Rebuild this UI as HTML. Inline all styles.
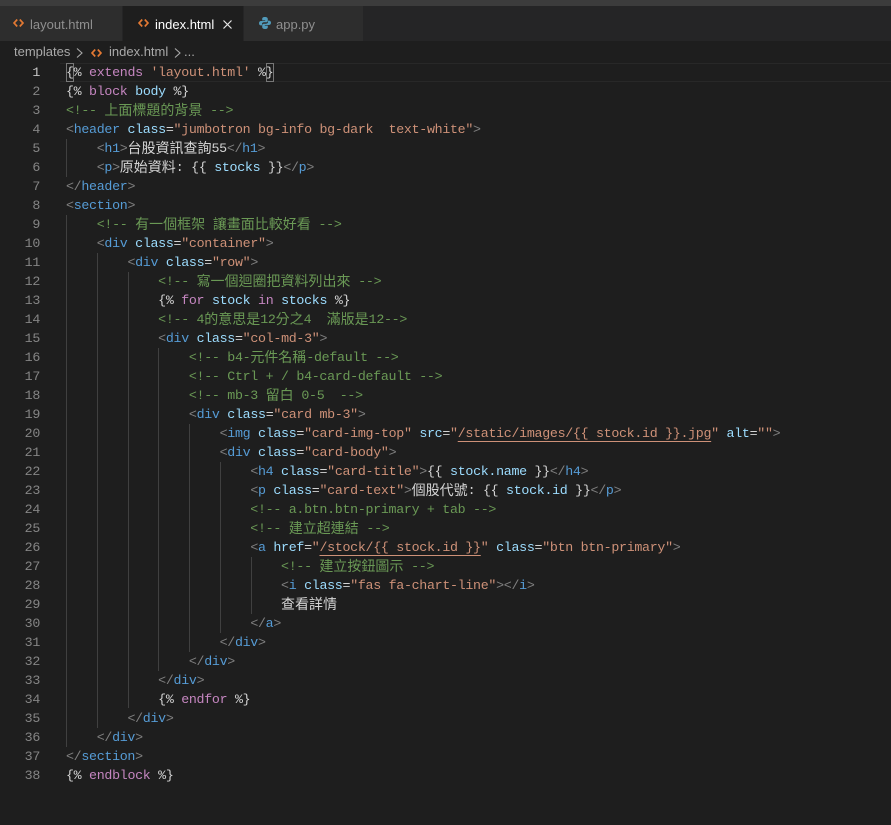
<!DOCTYPE html>
<html lang="zh-Hant"><head><meta charset="utf-8">
<style>
html,body{margin:0;padding:0;background:#1e1e1e;width:891px;height:825px;overflow:hidden}
#top{position:absolute;left:0;top:0;width:891px;height:6px;background:#3c3c3c}
#bar{position:absolute;left:0;top:6px;width:891px;height:35px;background:#252526}
.tab{position:absolute;top:6px;height:35px;background:#2d2d2d;font:13px/37px "Liberation Sans","Noto Sans CJK TC",sans-serif;color:#8f8f8f;white-space:pre}
.tab span{position:absolute;top:0}
.ic{position:absolute}
#crumb{position:absolute;left:0;top:41px;width:891px;height:22px;font:13px/22px "Liberation Sans",sans-serif;color:#a9a9a9}
#crumb span{position:absolute;top:0;white-space:pre}
#hl{position:absolute;left:60px;top:63px;width:831px;height:17px;border-top:1px solid #282828;border-bottom:1px solid #282828}
.bx{position:absolute;top:63px;width:6px;height:17px;border:1px solid #777;background:#1e1e1e}
.g{position:absolute;width:1px;background:#404040}
.n{position:absolute;left:0;width:40px;text-align:right;height:19px;font:13.3px/19px "Liberation Mono",monospace;letter-spacing:-.3px;color:#858585}
.l{position:absolute;left:66px;height:19px;font:13.3px/19px "Liberation Mono","Noto Sans CJK TC",monospace;letter-spacing:-.3px;color:#d4d4d4;white-space:pre}
.l i{font-style:normal;font-size:14px;line-height:0;letter-spacing:0;position:relative;top:1px;font-family:"Noto Sans CJK TC",sans-serif}
.t{color:#569cd6}.b{color:#808080}.a{color:#9cdcfe}.s{color:#ce9178}.m{color:#6a9955}.k{color:#c586c0}
.u{color:#ce9178;text-decoration:underline;text-decoration-skip-ink:none;text-decoration-thickness:1px;text-underline-offset:4px}
</style></head><body>
<div id="top"></div><div id="bar"></div>

<div class="tab" style="left:0;width:122px"><svg class="ic" style="left:13px;top:13px" width="11" height="8" viewBox="0 0 11 8" fill="none" stroke="#e37933" stroke-width="1.7"><path d="M4.2 .5 L1 4 L4.2 7.5 M6.8 .5 L10 4 L6.8 7.5"/></svg><span style="left:30px">layout.html</span></div>
<div class="tab" style="left:123px;width:120px;background:#1e1e1e;color:#fff"><svg class="ic" style="left:15px;top:13px" width="11" height="8" viewBox="0 0 11 8" fill="none" stroke="#e37933" stroke-width="1.7"><path d="M4.2 .5 L1 4 L4.2 7.5 M6.8 .5 L10 4 L6.8 7.5"/></svg><span style="left:32px">index.html</span><svg class="ic" style="left:100px;top:14px" width="9" height="9" viewBox="0 0 9 9" fill="none" stroke="#e8e8e8" stroke-width="1.2"><path d="M.5 .5 L8.5 8.5 M8.5 .5 L.5 8.5"/></svg></div>
<div class="tab" style="left:244px;width:119px"><svg class="ic" style="left:15px;top:11px" width="12" height="12" viewBox="0 0 12 12" fill="#519aba"><path id="py" d="M6 0 C3.6 0 3.2 1 3.2 2 V3.4 H6.2 V4 H2 C.8 4 0 4.9 0 6.2 C0 7.5 .8 8.4 2 8.4 H3 V7.1 C3 6 3.9 5.3 5 5.3 H7.2 C8.1 5.3 8.8 4.7 8.8 3.7 V2 C8.8 .9 8 0 6 0 Z"/><path transform="rotate(180 6 6)" d="M6 0 C3.6 0 3.2 1 3.2 2 V3.4 H6.2 V4 H2 C.8 4 0 4.9 0 6.2 C0 7.5 .8 8.4 2 8.4 H3 V7.1 C3 6 3.9 5.3 5 5.3 H7.2 C8.1 5.3 8.8 4.7 8.8 3.7 V2 C8.8 .9 8 0 6 0 Z"/></svg><span style="left:32px">app.py</span></div>

<div id="crumb"><span style="left:14px">templates</span><svg class="ic" style="left:76px;top:7px" width="7" height="10" viewBox="0 0 7 10" fill="none" stroke="#a9a9a9" stroke-width="1.1"><path d="M1 .5 L6 5 L1 9.5"/></svg><svg class="ic" style="left:91px;top:8px" width="11" height="8" viewBox="0 0 11 8" fill="none" stroke="#e37933" stroke-width="1.7"><path d="M4.2 .5 L1 4 L4.2 7.5 M6.8 .5 L10 4 L6.8 7.5"/></svg><span style="left:109px">index.html</span><svg class="ic" style="left:174px;top:7px" width="7" height="10" viewBox="0 0 7 10" fill="none" stroke="#a9a9a9" stroke-width="1.1"><path d="M1 .5 L6 5 L1 9.5"/></svg><span style="left:184px">...</span></div>

<div id="hl"></div>
<div class="bx" style="left:66px"></div><div class="bx" style="left:266px"></div>

<div class="g" style="left:66px;top:139px;height:38px"></div>
<div class="g" style="left:66px;top:215px;height:532px"></div>
<div class="g" style="left:97px;top:253px;height:475px"></div>
<div class="g" style="left:128px;top:272px;height:436px"></div>
<div class="g" style="left:158px;top:348px;height:323px"></div>
<div class="g" style="left:189px;top:424px;height:228px"></div>
<div class="g" style="left:220px;top:462px;height:171px"></div>
<div class="g" style="left:251px;top:557px;height:57px"></div>

<div class="n" style="top:63px;color:#c6c6c6">1</div><div class="n" style="top:82px">2</div><div class="n" style="top:101px">3</div><div class="n" style="top:120px">4</div><div class="n" style="top:139px">5</div><div class="n" style="top:158px">6</div><div class="n" style="top:177px">7</div><div class="n" style="top:196px">8</div><div class="n" style="top:215px">9</div><div class="n" style="top:234px">10</div><div class="n" style="top:253px">11</div><div class="n" style="top:272px">12</div><div class="n" style="top:291px">13</div><div class="n" style="top:310px">14</div><div class="n" style="top:329px">15</div><div class="n" style="top:348px">16</div><div class="n" style="top:367px">17</div><div class="n" style="top:386px">18</div><div class="n" style="top:405px">19</div><div class="n" style="top:424px">20</div><div class="n" style="top:443px">21</div><div class="n" style="top:462px">22</div><div class="n" style="top:481px">23</div><div class="n" style="top:500px">24</div><div class="n" style="top:519px">25</div><div class="n" style="top:538px">26</div><div class="n" style="top:557px">27</div><div class="n" style="top:576px">28</div><div class="n" style="top:595px">29</div><div class="n" style="top:614px">30</div><div class="n" style="top:633px">31</div><div class="n" style="top:652px">32</div><div class="n" style="top:671px">33</div><div class="n" style="top:690px">34</div><div class="n" style="top:709px">35</div><div class="n" style="top:728px">36</div><div class="n" style="top:747px">37</div><div class="n" style="top:766px">38</div>

<div class="l" style="top:63px">{% <span class="k">extends</span> <span class="s">'layout.html'</span> %}</div>
<div class="l" style="top:82px">{% <span class="k">block</span> <span class="a">body</span> %}</div>
<div class="l m" style="top:101px">&lt;!-- <i>上面標題的背景</i> --&gt;</div>
<div class="l" style="top:120px"><span class="b">&lt;</span><span class="t">header</span> <span class="a">class</span>=<span class="s">"jumbotron bg-info bg-dark  text-white"</span><span class="b">&gt;</span></div>
<div class="l" style="top:139px">    <span class="b">&lt;</span><span class="t">h1</span><span class="b">&gt;</span><i>台股資訊查詢</i>55<span class="b">&lt;/</span><span class="t">h1</span><span class="b">&gt;</span></div>
<div class="l" style="top:158px">    <span class="b">&lt;</span><span class="t">p</span><span class="b">&gt;</span><i>原始資料</i>: {{ <span class="a">stocks</span> }}<span class="b">&lt;/</span><span class="t">p</span><span class="b">&gt;</span></div>
<div class="l" style="top:177px"><span class="b">&lt;/</span><span class="t">header</span><span class="b">&gt;</span></div>
<div class="l" style="top:196px"><span class="b">&lt;</span><span class="t">section</span><span class="b">&gt;</span></div>
<div class="l m" style="top:215px">    &lt;!-- <i>有一個框架</i> <i>讓畫面比較好看</i> --&gt;</div>
<div class="l" style="top:234px">    <span class="b">&lt;</span><span class="t">div</span> <span class="a">class</span>=<span class="s">"container"</span><span class="b">&gt;</span></div>
<div class="l" style="top:253px">        <span class="b">&lt;</span><span class="t">div</span> <span class="a">class</span>=<span class="s">"row"</span><span class="b">&gt;</span></div>
<div class="l m" style="top:272px">            &lt;!-- <i>寫一個迴圈把資料列出來</i> --&gt;</div>
<div class="l" style="top:291px">            {% <span class="k">for</span> <span class="a">stock</span> <span class="k">in</span> <span class="a">stocks</span> %}</div>
<div class="l m" style="top:310px">            &lt;!-- 4<i>的意思是</i>12<i>分之</i>4  <i>滿版是</i>12--&gt;</div>
<div class="l" style="top:329px">            <span class="b">&lt;</span><span class="t">div</span> <span class="a">class</span>=<span class="s">"col-md-3"</span><span class="b">&gt;</span></div>
<div class="l m" style="top:348px">                &lt;!-- b4-<i>元件名稱</i>-default --&gt;</div>
<div class="l m" style="top:367px">                &lt;!-- Ctrl + / b4-card-default --&gt;</div>
<div class="l m" style="top:386px">                &lt;!-- mb-3 <i>留白</i> 0-5  --&gt;</div>
<div class="l" style="top:405px">                <span class="b">&lt;</span><span class="t">div</span> <span class="a">class</span>=<span class="s">"card mb-3"</span><span class="b">&gt;</span></div>
<div class="l" style="top:424px">                    <span class="b">&lt;</span><span class="t">img</span> <span class="a">class</span>=<span class="s">"card-img-top"</span> <span class="a">src</span>=<span class="s">"</span><span class="u">/static/images/{{ stock.id }}.jpg</span><span class="s">"</span> <span class="a">alt</span>=<span class="s">""</span><span class="b">&gt;</span></div>
<div class="l" style="top:443px">                    <span class="b">&lt;</span><span class="t">div</span> <span class="a">class</span>=<span class="s">"card-body"</span><span class="b">&gt;</span></div>
<div class="l" style="top:462px">                        <span class="b">&lt;</span><span class="t">h4</span> <span class="a">class</span>=<span class="s">"card-title"</span><span class="b">&gt;</span>{{ <span class="a">stock.name</span> }}<span class="b">&lt;/</span><span class="t">h4</span><span class="b">&gt;</span></div>
<div class="l" style="top:481px">                        <span class="b">&lt;</span><span class="t">p</span> <span class="a">class</span>=<span class="s">"card-text"</span><span class="b">&gt;</span><i>個股代號</i>: {{ <span class="a">stock.id</span> }}<span class="b">&lt;/</span><span class="t">p</span><span class="b">&gt;</span></div>
<div class="l m" style="top:500px">                        &lt;!-- a.btn.btn-primary + tab --&gt;</div>
<div class="l m" style="top:519px">                        &lt;!-- <i>建立超連結</i> --&gt;</div>
<div class="l" style="top:538px">                        <span class="b">&lt;</span><span class="t">a</span> <span class="a">href</span>=<span class="s">"</span><span class="u">/stock/{{ stock.id }}</span><span class="s">"</span> <span class="a">class</span>=<span class="s">"btn btn-primary"</span><span class="b">&gt;</span></div>
<div class="l m" style="top:557px">                            &lt;!-- <i>建立按鈕圖示</i> --&gt;</div>
<div class="l" style="top:576px">                            <span class="b">&lt;</span><span class="t">i</span> <span class="a">class</span>=<span class="s">"fas fa-chart-line"</span><span class="b">&gt;&lt;/</span><span class="t">i</span><span class="b">&gt;</span></div>
<div class="l" style="top:595px">                            <i>查看詳情</i></div>
<div class="l" style="top:614px">                        <span class="b">&lt;/</span><span class="t">a</span><span class="b">&gt;</span></div>
<div class="l" style="top:633px">                    <span class="b">&lt;/</span><span class="t">div</span><span class="b">&gt;</span></div>
<div class="l" style="top:652px">                <span class="b">&lt;/</span><span class="t">div</span><span class="b">&gt;</span></div>
<div class="l" style="top:671px">            <span class="b">&lt;/</span><span class="t">div</span><span class="b">&gt;</span></div>
<div class="l" style="top:690px">            {% <span class="k">endfor</span> %}</div>
<div class="l" style="top:709px">        <span class="b">&lt;/</span><span class="t">div</span><span class="b">&gt;</span></div>
<div class="l" style="top:728px">    <span class="b">&lt;/</span><span class="t">div</span><span class="b">&gt;</span></div>
<div class="l" style="top:747px"><span class="b">&lt;/</span><span class="t">section</span><span class="b">&gt;</span></div>
<div class="l" style="top:766px">{% <span class="k">endblock</span> %}</div>
</body></html>
